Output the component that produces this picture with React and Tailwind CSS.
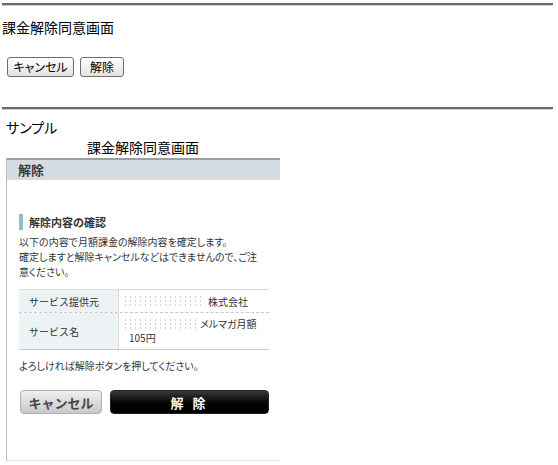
import React from 'react';

const dots =
  'bg-[image:radial-gradient(circle,#d2d2d2_0.7px,transparent_1px)] bg-[length:5px_4px]';

function Rule() {
  return <div className="ml-[2px] w-[551px] border-t-2 border-t-[#6a6a6a] border-b border-b-[#d0d0d0]" />;
}

function SamplePanel() {
  return (
    <div className="ml-[6px] w-[274px] border-l border-l-[#bdbdbd] border-b border-b-[#e2e2e2] pb-[46px] text-[#333]">
      {/* header */}
      <div className="h-[22px] border-t-2 border-t-[#9aa0a4] bg-[#d6dde2] pl-[11px] text-[13px] leading-[19px] font-bold text-[#3a3a3a]">
        解除
      </div>

      {/* 見出し */}
      <div className="mt-[34px] ml-[12px] flex items-center gap-[6px]">
        <span className="w-[4px] h-[16px] bg-[#8fc0c8]" />
        <span className="text-[11px] font-bold leading-[16px]">解除内容の確認</span>
      </div>

      <p className="mt-[4px] ml-[12px] text-[10px] leading-[15px] whitespace-nowrap [font-feature-settings:'palt']">
        以下の内容で月額課金の解除内容を確定します。
        <br />
        確定しますと解除キャンセルなどはできませんので、ご注
        <br />
        意ください。
      </p>

      {/* table */}
      <div className="mt-[10px] ml-[12px] w-[250px] border-t border-t-[#dcdcdc] border-b border-b-[#c9c9c9] text-[10px]">
        <div className="flex h-[23px] border-b border-dashed border-b-[#c8c8c8]">
          <div className="w-[100px] bg-[#edf3f4] pl-[10px] flex items-center border-r border-dotted border-r-[#c8c8c8]">
            サービス提供元
          </div>
          <div className="flex-1 pl-[4px] flex items-center gap-[3px]">
            <span className={`inline-block w-[82px] h-[12px] ${dots}`} />
            <span>株式会社</span>
          </div>
        </div>
        <div className="flex h-[36px]">
          <div className="w-[100px] bg-[#edf3f4] pl-[10px] flex items-center border-r border-dotted border-r-[#c8c8c8]">
            サービス名
          </div>
          <div className="flex-1 pl-[4px] pt-[4px] leading-[14px]">
            <div className="flex items-center gap-[3px] [font-feature-settings:'palt']">
              <span className={`inline-block w-[74px] h-[12px] ${dots}`} />
              <span>メルマガ月額</span>
            </div>
            <div className="pl-[6px]">105円</div>
          </div>
        </div>
      </div>

      <p className="mt-[9px] ml-[12px] text-[10px] leading-[14px] [font-feature-settings:'palt']">
        よろしければ解除ボタンを押してください。
      </p>

      <div className="mt-[17px] ml-[13px] flex gap-[8px]">
        <button className="w-[82px] h-[24px] rounded-[4px] border border-[#b0b0b0] bg-linear-to-b from-[#f0f0f0] to-[#c9c9c9] text-[13px] font-bold text-[#444] leading-none">
          キャンセル
        </button>
        <button className="w-[159px] h-[24px] rounded-[4px] border border-[#222] bg-linear-to-b from-[#3a3a3a] via-[#0a0a0a] to-black text-[13px] font-bold text-white tracking-[3px] leading-none">
          解 除
        </button>
      </div>
    </div>
  );
}

export default function App() {
  return (
    <div className="w-[558px] h-[465px] overflow-hidden bg-white text-black font-['Noto_Sans_CJK_JP','Noto_Sans',sans-serif]">
      <div className="pt-[3px]">
        <Rule />
      </div>

      <h1 className="mt-[13px] ml-[2px] text-[14px] leading-[17px] font-normal">課金解除同意画面</h1>

      <div className="mt-[21px] ml-[7px] flex gap-[6px]">
        <button className="w-[67px] h-[20px] rounded-[3px] border border-[#6e6e6e] bg-linear-to-b from-white to-[#e2e2e2] text-[12px] leading-none [font-feature-settings:'palt']">
          キャンセル
        </button>
        <button className="w-[44px] h-[20px] rounded-[3px] border border-[#6e6e6e] bg-linear-to-b from-white to-[#e2e2e2] text-[12px] leading-none">
          解除
        </button>
      </div>

      <div className="mt-[30px]">
        <Rule />
      </div>

      <div className="mt-[9px] ml-[6px] text-[14px] leading-[17px] [font-feature-settings:'palt']">サンプル</div>
      <div className="mt-[3px] ml-[87px] text-[14px] leading-[17px]">課金解除同意画面</div>

      <div className="mt-[2px]">
        <SamplePanel />
      </div>
    </div>
  );
}
